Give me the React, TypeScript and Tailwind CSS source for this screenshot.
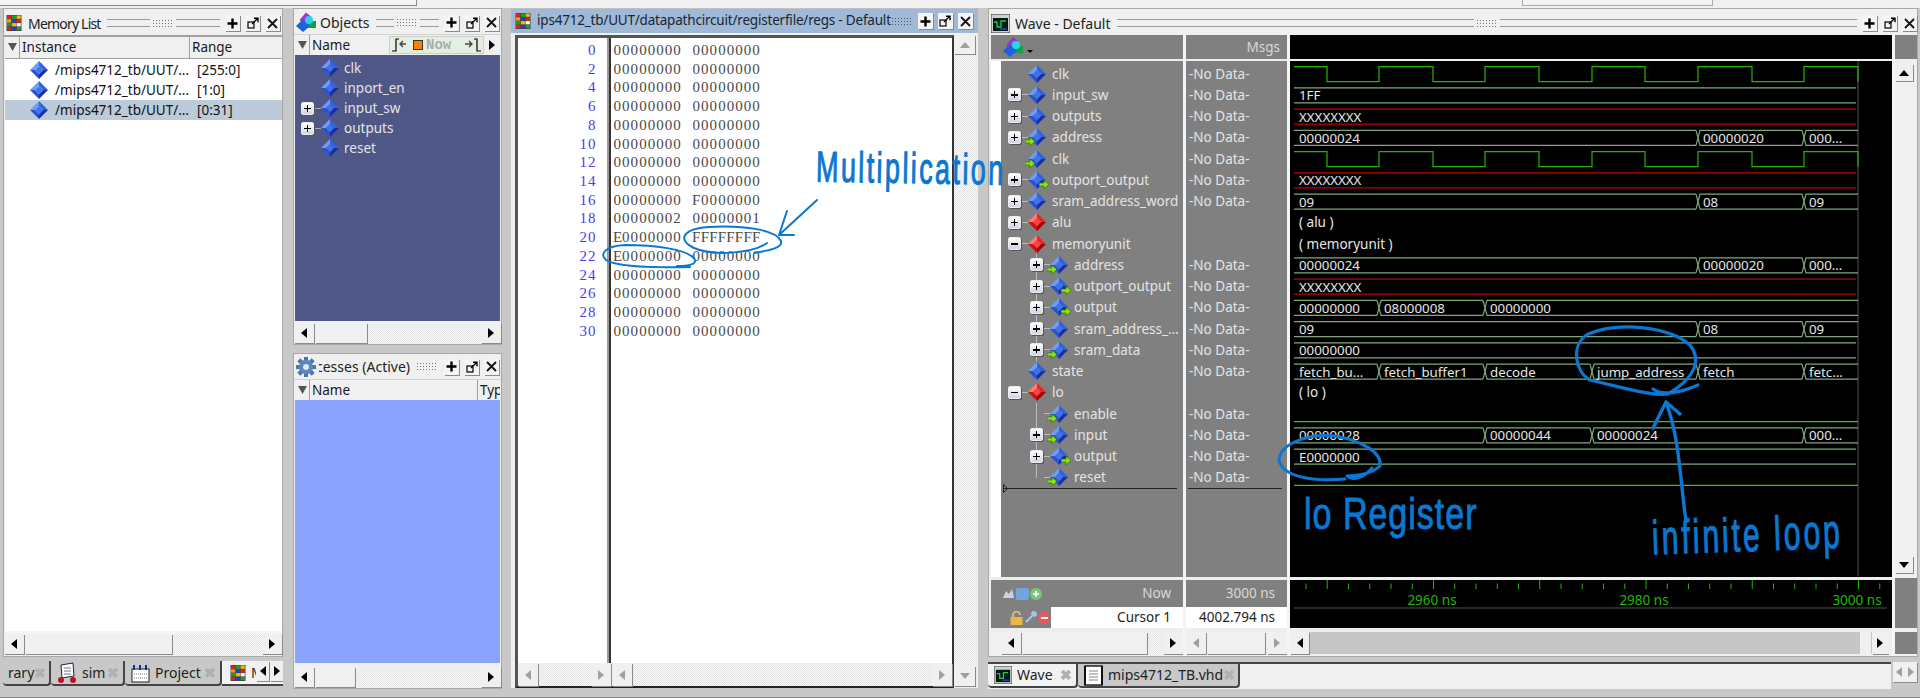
import React from "react";

const UI = "font-['Noto_Sans','Liberation_Sans',sans-serif]";

function Diamond({ red = false, size = 18 }: { red?: boolean; size?: number }) {
  const c = red
    ? { tl: "#ff7a7a", tr: "#ee2222", bl: "#cc1111", br: "#a00000", m: "#ff4040" }
    : { tl: "#6f9cf5", tr: "#2f62e0", bl: "#2a52d0", br: "#1a2fa0", m: "#3f72ee" };
  return (
    <svg width={size} height={size} viewBox="0 0 18 18" className="shrink-0">
      <polygon points="9,0 0,9 5,9 9,5" fill={c.tl} />
      <polygon points="9,0 18,9 13,9 9,5" fill={c.tr} />
      <polygon points="0,9 9,18 9,13 5,9" fill={c.bl} />
      <polygon points="18,9 9,18 9,13 13,9" fill={c.br} />
      <polygon points="9,5 13,9 9,13 5,9" fill={c.m} />
    </svg>
  );
}

function ArrowOverlay({ out }: { out?: boolean }) {
  return (
    <svg width="10" height="9" viewBox="0 0 10 9" className={out ? "absolute right-[-3px] bottom-0" : "absolute left-[-3px] bottom-0"}>
      <polygon points="0,3 5,3 5,0 10,4.5 5,9 5,6 0,6" fill="#8fe010" stroke="#1d6a00" strokeWidth="0.6" />
    </svg>
  );
}

function SigIcon({ dir, red }: { dir?: "in" | "out"; red?: boolean }) {
  return (
    <span className="relative block h-[18px] w-[18px] shrink-0">
      <Diamond red={red} />
      {dir === "in" && <ArrowOverlay />}
      {dir === "out" && <ArrowOverlay out />}
    </span>
  );
}

function Expander({ minus }: { minus?: boolean }) {
  return (
    <span className="relative block h-[13px] w-[13px] shrink-0 rounded-[2px] bg-gradient-to-b from-white to-[#cfd4e6] border border-[#eeeeee] shadow-[1px_1px_0_#555]">
      <span className="absolute left-[2px] top-[5px] h-[1.5px] w-[7px] bg-black" />
      {!minus && <span className="absolute left-[4.8px] top-[2px] h-[7px] w-[1.5px] bg-black" />}
    </span>
  );
}

function WinButtons() {
  return (
    <div className="flex items-center gap-[5px] shrink-0">
      <span className="flex h-[16px] w-[15px] items-center justify-center bg-[#f4f4f4] shadow-[1px_1px_0_#8a8a8a]">
        <svg width="11" height="11" viewBox="0 0 11 11"><path d="M5.5 0.5v10M0.5 5.5h10" stroke="#000" strokeWidth="2.4" /></svg>
      </span>
      <span className="flex h-[16px] w-[15px] items-center justify-center bg-[#f4f4f4] shadow-[1px_1px_0_#8a8a8a]">
        <svg width="12" height="12" viewBox="0 0 12 12" fill="none"><rect x="1" y="5" width="6" height="6" stroke="#000" strokeWidth="1.2" /><path d="M5 7 L10.5 1.5 M7 1.2h4v4" stroke="#000" strokeWidth="1.4" /></svg>
      </span>
      <span className="flex h-[16px] w-[15px] items-center justify-center bg-[#f4f4f4] shadow-[1px_1px_0_#8a8a8a]">
        <svg width="11" height="11" viewBox="0 0 11 11"><path d="M1 1l9 9M10 1l-9 9" stroke="#111" strokeWidth="1.8" /></svg>
      </span>
    </div>
  );
}

function Grip({ dots = true, className = "" }: { dots?: boolean; className?: string }) {
  return (
    <div className={`flex items-center gap-[2px] min-w-0 ${className}`}>
      <span className="h-[8px] flex-1 border-y border-[#9a9a9a]" />
      {dots && (
        <span className="h-[9px] w-[22px] shrink-0 bg-[radial-gradient(#777_0.7px,transparent_0.8px)] bg-[length:3px_3px]" />
      )}
      <span className="h-[8px] flex-1 border-y border-[#9a9a9a]" />
    </div>
  );
}

function GridLogo({ size = 16 }: { size?: number }) {
  const colors = ["#e02020", "#20a020", "#e8c000", "#f0a000", "#2040d0", "#e02020", "#20a020", "#e8c000", "#ffffff", "#e02020", "#2040d0", "#20a020"];
  return (
    <svg width={size} height={size} viewBox="0 0 15 16" className="shrink-0">
      <rect width="15" height="16" fill="#444" />
      {colors.map((c, i) => (
        <rect key={i} x={0.5 + (i % 3) * 4.8} y={0.5 + Math.floor(i / 3) * 3.8} width="4.2" height="3.3" fill={c} />
      ))}
    </svg>
  );
}

function ObjectsLogo() {
  return (
    <svg width="21" height="21" viewBox="0 0 21 21" className="shrink-0">
      <polygon points="4,8 10,1 15,5 9,11" fill="#b030e0" stroke="#6a1090" strokeWidth="0.6" />
      <rect x="11" y="9" width="9" height="7" fill="#18a048" />
      <polygon points="7,7 14,14 7,20 0,14" fill="#1f5fe0" />
      <circle cx="13" cy="8" r="4" fill="#20d8e8" />
    </svg>
  );
}

function Gear() {
  return (
    <svg width="20" height="20" viewBox="0 0 20 20" className="shrink-0">
      <g fill="#4a76a8">
        {[0, 45, 90, 135, 180, 225, 270, 315].map((a) => (
          <rect key={a} x="8" y="0" width="4" height="20" transform={`rotate(${a} 10 10)`} />
        ))}
      </g>
      <circle cx="10" cy="10" r="7.2" fill="#5d86b8" />
      <circle cx="10" cy="10" r="3" fill="#dfe8f0" />
    </svg>
  );
}

function WaveLogo({ size = 19 }: { size?: number }) {
  return (
    <svg width={size} height={size} viewBox="0 0 19 19" className="shrink-0">
      <rect width="19" height="19" fill="#cfcfcf" stroke="#333" />
      <rect x="2" y="4" width="15" height="13" fill="#001a10" />
      <path d="M3 8h3v5h4V7h5" stroke="#10d060" strokeWidth="1.3" fill="none" />
      <path d="M9 15h7" stroke="#4040e0" strokeWidth="1.3" />
    </svg>
  );
}

function ArrowBtn({ dir, w = 20, dim = false }: { dir: "l" | "r" | "u" | "d"; w?: number; dim?: boolean }) {
  const pts = { l: "6,0 0,5 6,10", r: "0,0 6,5 0,10", u: "0,6 5,0 10,6", d: "0,0 5,6 10,0" }[dir];
  const vert = dir === "u" || dir === "d";
  return (
    <span style={{ width: w }} className="flex h-full shrink-0 items-center justify-center bg-[#f0f0f0] shadow-[1px_1px_0_#8a8a8a]">
      <svg width={vert ? 10 : 6} height={vert ? 6 : 10} viewBox={vert ? "0 0 10 6" : "0 0 6 10"}>
        <polygon points={pts} fill={dim ? "#a0a0a0" : "#000"} />
      </svg>
    </span>
  );
}

function HScroll({ thumbW, className = "", lw = 20, rw = 20, dim = false }: { thumbW: string; className?: string; lw?: number; rw?: number; dim?: boolean }) {
  return (
    <div className={`flex h-[20px] shrink-0 items-stretch bg-[repeating-conic-gradient(#e4e4e4_0_25%,#f8f8f8_0_50%)] bg-[length:2px_2px] ${className}`}>
      <ArrowBtn dir="l" w={lw} dim={dim} />
      {thumbW && <span className={`${thumbW} ml-[1px] shrink-0 bg-[#f0f0f0] shadow-[1px_1px_0_#8a8a8a]`} />}
      <span className="flex-1" />
      <ArrowBtn dir="r" w={rw} dim={dim} />
    </div>
  );
}

function Tab({ icon, label, active, w }: { icon: React.ReactNode; label: string; active?: boolean; w: string }) {
  return (
    <div className={`flex h-[25px] shrink-0 items-center rounded-b-[4px] border-b-2 border-r-2 border-[#444] pl-[6px] pr-[4px] ${w} ${active ? "bg-[#f2f2f2]" : "bg-[#c8c8c8]"}`}>
      {icon}
      <span className="ml-[5px] text-[14px] leading-none text-[#222]">{label}</span>
      {label && <span className="ml-auto text-[14px] font-bold leading-none text-[#b0b0b0]">✖</span>}
    </div>
  );
}

function ColHead({ label, className = "" }: { label: string; className?: string }) {
  return <div className={`flex h-full items-center bg-[#f0f0f0] pl-[2px] text-[13.5px] text-[#17171f] ${className}`}>{label}</div>;
}

function SortBtn() {
  return (
    <div className="flex h-full w-[15px] shrink-0 items-center justify-center bg-[#f0f0f0] border-r border-[#a0a0a0]">
      <svg width="9" height="9" viewBox="0 0 9 9"><polygon points="0,0 9,0 4.5,8" fill="#555" /></svg>
    </div>
  );
}

function MemoryList() {
  const rows = [
    ["/mips4712_tb/UUT/…", "[255:0]"],
    ["/mips4712_tb/UUT/…", "[1:0]"],
    ["/mips4712_tb/UUT/…", "[0:31]"],
  ];
  return (
    <div className="flex w-[283px] shrink-0 flex-col pl-[3px]">
      <div className="flex min-h-0 flex-1 flex-col bg-[#f0f0f0] border border-[#a8a8a8]">
        <div className="flex h-[26px] shrink-0 items-center px-[2px] pt-[2px]">
          <GridLogo />
          <span className="ml-[6px] text-[14px] tracking-[-0.8px] text-[#222] whitespace-nowrap">Memory List</span>
          <Grip className="ml-[6px] mr-[5px] flex-1" />
          <WinButtons />
        </div>
        <div className="flex h-[23px] shrink-0 items-stretch border-t-2 border-[#a0a0a0]">
          <div className="ml-[1px] flex h-full w-[15px] items-center justify-center border-r border-[#a0a0a0]">
            <svg width="9" height="9" viewBox="0 0 9 9"><polygon points="0,0 9,0 4.5,8" fill="#555" /></svg>
          </div>
          <ColHead label="Instance" className="w-[170px] border-r border-[#a0a0a0]" />
          <ColHead label="Range" className="flex-1" />
        </div>
        <div className="ml-[1px] min-h-0 flex-1 border-t border-[#a0a0a0] bg-white pt-[1px]">
          {rows.map((r, i) => (
            <div key={i} className={`flex h-[20px] items-center ${i === 2 ? "bg-[#bccbd9]" : ""}`}>
              <span className="ml-[25px]"><Diamond /></span>
              <span className="ml-[7px] w-[139px] text-[13.5px] text-[#111] whitespace-nowrap">{r[0]}</span>
              <span className="ml-[3px] text-[13.5px] text-[#111]">{r[1]}</span>
            </div>
          ))}
        </div>
        <div className="h-[3px] shrink-0 bg-[#f4f4f4]" />
        <HScroll thumbW="w-[147px]" />
        <div className="h-[2px] shrink-0" />
      </div>
      <div className="flex h-[32px] shrink-0 items-start pt-[4px]">
        <Tab icon={null} label="rary" w="w-[48px] !pl-0" />
        <Tab icon={<Cart />} label="sim" w="w-[74px]" />
        <Tab icon={<ProjIcon />} label="Project" w="w-[97px]" />
        <div className="relative flex h-[25px] flex-1 items-center overflow-hidden border-b-2 border-[#444] bg-[#f2f2f2] pl-[8px]">
          <GridLogo />
          <span className="ml-[5px] text-[14px] leading-none text-[#222]">M</span>
          <div className="absolute right-0 top-0 flex h-[20px]">
            <ArrowBtn dir="l" w={13} />
            <span className="w-[1px]" />
            <ArrowBtn dir="r" w={13} />
          </div>
        </div>
      </div>
    </div>
  );
}

function Cart() {
  return (
    <svg width="20" height="22" viewBox="0 0 20 22" className="shrink-0">
      <path d="M4 3l12-2 1 13-12 2z" fill="#fff" stroke="#223" />
      <path d="M7 6h7M7 9h7M7 12h7" stroke="#678" />
      <circle cx="4" cy="18" r="3" fill="#c01020" />
      <circle cx="16" cy="18" r="3" fill="#c01020" />
    </svg>
  );
}

function ProjIcon() {
  return (
    <svg width="19" height="20" viewBox="0 0 19 20" className="shrink-0">
      <rect x="1" y="6" width="17" height="13" fill="#fff" stroke="#222" />
      <path d="M3 2v5M9 2v5M15 2v5" stroke="#1a2aa0" strokeWidth="2" />
      <path d="M3 11h13M3 15h13" stroke="#777" strokeDasharray="1 1" />
    </svg>
  );
}

function ObjectsCol() {
  const rows: [string, boolean][] = [["clk", false], ["inport_en", false], ["input_sw", true], ["outputs", true], ["reset", false]];
  return (
    <div className="ml-[10px] flex w-[209px] shrink-0 flex-col">
      <div className="flex h-[337px] shrink-0 flex-col bg-[#f0f0f0] border border-[#a8a8a8]">
        <div className="flex h-[25px] shrink-0 items-center pl-[2px] pr-[2px] pt-[2px]">
          <ObjectsLogo />
          <span className="ml-[3px] text-[14px] text-[#222]">Objects</span>
          <Grip className="ml-[6px] mr-[5px] flex-1" />
          <WinButtons />
        </div>
        <div className="flex h-[21px] shrink-0 items-stretch border-t border-[#d0d0d0] pl-[1px] pr-[1px]">
          <SortBtn />
          <ColHead label="Name" className="w-[79px]" />
          <div className="my-[1px] flex w-[95px] shrink-0 items-center bg-[#e4efe2] border border-[#c8d0c8]">
            <svg width="20" height="16" viewBox="0 0 20 16" fill="none"><path d="M2 14h4V2h3" stroke="#000" strokeWidth="1.2" /><path d="M16 7h-5M13 4l-3 3 3 3" stroke="#444" strokeWidth="1.4" /></svg>
            <span className="ml-[3px] h-[10px] w-[10px] shrink-0 bg-[#ff8000] border border-[#333]" />
            <span className="ml-[3px] font-['Liberation_Mono',monospace] text-[14px] font-bold leading-none text-[#a9aea9]">Now</span>
            <svg width="20" height="16" viewBox="0 0 20 16" fill="none" className="ml-auto"><path d="M18 14h-4V2h-3" stroke="#000" strokeWidth="1.2" /><path d="M2 7h6M6 4l3 3-3 3" stroke="#444" strokeWidth="1.4" /></svg>
          </div>
          <div className="flex flex-1 items-center justify-center">
            <svg width="6" height="10" viewBox="0 0 6 10"><polygon points="0,0 6,5 0,10" fill="#000" /></svg>
          </div>
        </div>
        <div className="ml-[1px] mr-[1px] flex min-h-0 flex-1 flex-col bg-[#4f5787] pt-[3px]">
          {rows.map(([n, exp]) => (
            <div key={n} className="flex h-[20px] items-center">
              <span className="ml-[6px] flex w-[14px] shrink-0">{exp && <Expander />}</span>
              <span className="h-[1px] w-[6px] shrink-0 bg-[#aaa]" style={{ opacity: exp ? 1 : 0 }} />
              <Diamond />
              <span className="ml-[5px] text-[13.5px] text-[#e4e4e4]">{n}</span>
            </div>
          ))}
        </div>
        <HScroll thumbW="w-[52px]" className="mt-[2px] mb-[1px]" lw={20} rw={20} />
      </div>
      <div className="mt-[8px] flex min-h-0 flex-1 flex-col bg-[#f0f0f0] border border-[#a8a8a8]">
        <div className="flex h-[25px] shrink-0 items-center pl-[2px] pr-[2px]">
          <Gear />
          <span className="ml-[3px] w-[91px] overflow-hidden text-[14px] text-[#222] whitespace-nowrap">
            <span className="-ml-[3px] block">cesses (Active)</span>
          </span>
          <Grip className="ml-[4px] mr-[4px] flex-1" />
          <WinButtons />
        </div>
        <div className="flex h-[21px] shrink-0 items-stretch border-t border-[#d0d0d0] pl-[1px] pr-[1px]">
          <SortBtn />
          <ColHead label="Name" className="w-[168px] border-r border-[#a0a0a0]" />
          <ColHead label="Typ" className="flex-1 overflow-hidden" />
        </div>
        <div className="mx-[1px] min-h-0 flex-1 bg-[#8aa3fc]" />
        <HScroll thumbW="w-[40px]" className="mt-[4px] mb-[1px]" lw={20} rw={20} />
      </div>
    </div>
  );
}

function Cells({ s }: { s: string }) {
  return (
    <>
      {s.split("").map((ch, i) => (
        <span key={i} className="inline-block w-[8.55px] text-center">{ch}</span>
      ))}
    </>
  );
}

function MemView() {
  const rows = Array.from({ length: 16 }, (_, i) => {
    const addr = i * 2;
    let a = "00000000";
    let b = "00000000";
    if (addr === 16) b = "F0000000";
    if (addr === 18) { a = "00000002"; b = "00000001"; }
    if (addr === 20) { a = "E0000000"; b = "FFFFFFFF"; }
    if (addr === 22) a = "E0000000";
    return { addr, a, b };
  });
  const mono = "font-['Liberation_Serif',serif] text-[15px] leading-[18.73px] whitespace-nowrap";
  return (
    <div className="ml-[9px] flex w-[467px] shrink-0 flex-col pb-[1px]">
      <div className="flex h-[25px] shrink-0 items-center bg-[#9fb9d6] pl-[4px] pr-[7px] border-t border-[#c0c0c0]">
        <GridLogo />
        <span className="ml-[6px] text-[13.5px] leading-none tracking-[-0.2px] text-[#1c2430] whitespace-nowrap">ips4712_tb/UUT/datapathcircuit/registerfile/regs - Default</span>
        <span className="ml-auto mr-[5px] h-[9px] w-[22px] shrink-0 bg-[radial-gradient(#555_0.7px,transparent_0.8px)] bg-[length:3px_3px]" />
        <WinButtons />
      </div>
      <div className="flex min-h-0 flex-1 bg-[#f0f0f0] pl-[4px] pt-[2px]">
        <div className="flex min-w-0 flex-1 flex-col border-b-2 border-r-2 border-l-[3px] border-t-[3px] border-b-[#222] border-r-[#333] border-l-[#555] border-t-[#555]">
          <div className="flex min-h-0 flex-1 bg-white">
            <div className="w-[91px] shrink-0 border-r-[2px] border-[#9a9a9a] pr-[11px] pt-[3px] text-right">
              {rows.map((r) => (
                <div key={r.addr} className={`h-[18.73px] ${mono} text-[#4a3cf0]`}><Cells s={String(r.addr)} /></div>
              ))}
            </div>
            <div className="w-[2px] shrink-0 bg-[#333]" />
            <div className="min-w-0 flex-1 pl-[2px] pt-[3px]">
              {rows.map((r) => (
                <div key={r.addr} className={`flex h-[18.73px] ${mono} text-[#4a4a4a]`}>
                  <span className="w-[79px]"><Cells s={r.a} /></span>
                  <span><Cells s={r.b} /></span>
                </div>
              ))}
            </div>
          </div>
          <div className="flex h-[23px] shrink-0 gap-[1px]">
            <HScroll thumbW="" className="!h-[23px] w-[93px]" dim />
            <HScroll thumbW="" className="!h-[23px] flex-1" dim />
          </div>
        </div>
        <div className="flex w-[24px] shrink-0 flex-col pb-[2px] pr-[2px] bg-[repeating-conic-gradient(#e4e4e4_0_25%,#f8f8f8_0_50%)] bg-[length:2px_2px]">
          <div className="h-[19px] shrink-0"><ArrowBtn dir="u" w={21} dim /></div>
          <div className="flex-1" />
          <div className="h-[20px] shrink-0"><ArrowBtn dir="d" w={21} dim /></div>
        </div>
      </div>
    </div>
  );
}

const ROW = 21.25;
const topY = (i: number) => 5.7 + ROW * i; // in wave body svg coordinates (body starts at y=61)
const W = 1290; // svg x origin in page coordinates
const px = (x: number) => x - W;
const END = 1858;
const WF = "'Noto Sans','Liberation Sans',sans-serif";

type Seg = [number, number, string];

function Clock({ i }: { i: number }) {
  const t = topY(i);
  const b = t + 15;
  const xs = [1327, 1379, 1433, 1485, 1539, 1592, 1645, 1698, 1752, 1804, 1858];
  let d = `M${px(1294)} ${t}`;
  xs.forEach((x, k) => {
    const y = k % 2 === 0 ? t : b;
    const ny = k % 2 === 0 ? b : t;
    d += ` L${px(x)} ${y} L${px(x)} ${ny}`;
  });
  return <path d={d} stroke="#22b800" strokeWidth="1.2" fill="none" />;
}

function Bus({ i, segs, color = "#7fa97a", text = "#e6e6e6" }: { i: number; segs: Seg[]; color?: string; text?: string }) {
  const t = topY(i);
  const b = t + 15;
  return (
    <g>
      {segs.map(([a, e, s], k) => (
        <g key={k}>
          <path
            d={
              k === 0
                ? `M${px(a)} ${t} H${px(e) - 2} M${px(a)} ${b} H${px(e) - 2}`
                : `M${px(a)} ${t + 7.5} L${px(a) + 2} ${t} H${px(e) - (e === END ? 0 : 2)} M${px(a)} ${t + 7.5} L${px(a) + 2} ${b} H${px(e) - (e === END ? 0 : 2)}`
            }
            stroke={color}
            strokeWidth="1.2"
            fill="none"
          />
          {k > 0 && <path d={`M${px(a)} ${t + 7.5} L${px(a) - 2} ${t} M${px(a)} ${t + 7.5} L${px(a) - 2} ${b}`} stroke={color} strokeWidth="1.2" fill="none" />}
          <text x={px(a) + 5} y={t + 12.5} fontSize="13.3" fill={text} fontFamily={WF}>{s}</text>
        </g>
      ))}
    </g>
  );
}

function Label({ i, s }: { i: number; s: string }) {
  return <text x={px(1299)} y={topY(i) + 12} fontSize="13.5" fill="#e6e6e6" fontFamily={WF}>{s}</text>;
}

function WaveChart() {
  const addr: Seg[] = [[1294, 1698, "00000024"], [1698, 1804, "00000020"], [1804, END, "000…"]];
  const sram: Seg[] = [[1294, 1698, "09"], [1698, 1804, "08"], [1804, END, "09"]];
  return (
    <svg width="602" height="515" viewBox="0 0 602 515" className="block">
      <line x1={px(END)} x2={px(END)} y1="0" y2="515" stroke="#555" />
      <Clock i={0} />
      <Bus i={1} segs={[[1294, END, "1FF"]]} />
      <Bus i={2} segs={[[1294, END, "XXXXXXXX"]]} color="#c00000" />
      <Bus i={3} segs={addr} />
      <Clock i={4} />
      <Bus i={5} segs={[[1294, END, "XXXXXXXX"]]} color="#c00000" />
      <Bus i={6} segs={sram} />
      <Label i={7} s="( alu )" />
      <Label i={8} s="( memoryunit )" />
      <Bus i={9} segs={addr} />
      <Bus i={10} segs={[[1294, END, "XXXXXXXX"]]} color="#c00000" />
      <Bus i={11} segs={[[1294, 1379, "00000000"], [1379, 1485, "08000008"], [1485, END, "00000000"]]} />
      <Bus i={12} segs={sram} />
      <Bus i={13} segs={[[1294, END, "00000000"]]} />
      <Bus i={14} segs={[[1294, 1379, "fetch_bu…"], [1379, 1485, "fetch_buffer1"], [1485, 1592, "decode"], [1592, 1698, "jump_address"], [1698, 1804, "fetch"], [1804, END, "fetc…"]]} />
      <Label i={15} s="( lo )" />
      <line x1={px(1294)} x2={px(END)} y1={topY(16) + 15} y2={topY(16) + 15} stroke="#33cc00" strokeWidth="1.2" />
      <Bus i={17} segs={[[1294, 1485, "00000028"], [1485, 1592, "00000044"], [1592, 1804, "00000024"], [1804, END, "000…"]]} />
      <Bus i={18} segs={[[1294, END, "E0000000"]]} />
      <line x1={px(1294)} x2={px(END)} y1={topY(19) + 15} y2={topY(19) + 15} stroke="#33cc00" strokeWidth="1.2" />
    </svg>
  );
}

function Ruler() {
  const ticks = Array.from({ length: 28 }, (_, k) => 1306 + 21.25 * k);
  const labels: [number, string][] = [[1432, "2960 ns"], [1644, "2980 ns"], [1857, "3000 ns"]];
  return (
    <svg width="602" height="48" viewBox="0 0 602 48" className="block">
      {ticks.map((x, k) => {
        const major = (k - 1) % 5 === 0;
        return <line key={k} x1={px(x)} x2={px(x)} y1={major ? 0 : 3.5} y2="9" stroke="#22b800" strokeWidth="1" />;
      })}
      {labels.map(([x, s]) => (
        <text key={s} x={px(x)} y="25" textAnchor="middle" fontSize="13.5" fill="#22b800" fontFamily={WF}>{s}</text>
      ))}
      <line x1={px(1294)} x2={px(1887)} y1="28" y2="28" stroke="#555" />
    </svg>
  );
}

type NameRow = { n: string; d: 0 | 1; exp?: "+" | "-"; dir?: "in" | "out"; red?: boolean; msg?: boolean };

const names: NameRow[] = [
  { n: "clk", d: 0, msg: true },
  { n: "input_sw", d: 0, exp: "+", msg: true },
  { n: "outputs", d: 0, exp: "+", msg: true },
  { n: "address", d: 0, exp: "+", dir: "in", msg: true },
  { n: "clk", d: 0, dir: "in", msg: true },
  { n: "outport_output", d: 0, exp: "+", dir: "out", msg: true },
  { n: "sram_address_word", d: 0, exp: "+", msg: true },
  { n: "alu", d: 0, exp: "+", red: true },
  { n: "memoryunit", d: 0, exp: "-", red: true },
  { n: "address", d: 1, exp: "+", dir: "in", msg: true },
  { n: "outport_output", d: 1, exp: "+", dir: "out", msg: true },
  { n: "output", d: 1, exp: "+", dir: "out", msg: true },
  { n: "sram_address_…", d: 1, exp: "+", msg: true },
  { n: "sram_data", d: 1, exp: "+", dir: "in", msg: true },
  { n: "state", d: 0, msg: true },
  { n: "lo", d: 0, exp: "-", red: true },
  { n: "enable", d: 1, dir: "in", msg: true },
  { n: "input", d: 1, exp: "+", dir: "in", msg: true },
  { n: "output", d: 1, exp: "+", dir: "out", msg: true },
  { n: "reset", d: 1, dir: "in", msg: true },
];

function WavePanel() {
  return (
    <div className="ml-[10px] flex w-[930px] shrink-0 flex-col">
      <div className="flex min-h-0 flex-1 flex-col bg-[#f0f0f0] border border-[#a8a8a8]">
        <div className="flex h-[26px] shrink-0 items-center pl-[2px] pt-[2px]">
          <WaveLogo />
          <span className="ml-[5px] text-[14px] text-[#222]">Wave - Default</span>
          <Grip className="ml-[6px] mr-[5px] flex-1" />
          <WinButtons />
        </div>
        <div className="flex min-h-0 flex-1 pl-[2px]">
          <div className="flex w-[192px] shrink-0 flex-col">
            <div className="flex h-[24px] shrink-0 items-center bg-[#808080] pl-[12px]">
              <ObjectsLogo />
              <svg width="6" height="3" viewBox="0 0 6 3" className="ml-[3px] mt-[8px]"><polygon points="0,0 6,0 3,3" fill="#000" /></svg>
            </div>
            <div className="h-[2px] shrink-0 bg-[#eeeeee]" />
            <div className="flex min-h-0 flex-1 bg-white pl-[10px]">
              <div className="relative flex-1 bg-[#808080] pt-[2px]">
                {names.map((r, i) => (
                  <div key={i} className="relative flex h-[21.25px] items-center">
                    {r.d === 1 && <span className="absolute left-[35px] top-0 w-[1px] bg-[#bdbdbd]" style={{ height: r.n === "reset" ? "11px" : "100%" }} />}
                    <span className={`block shrink-0 ${r.d === 1 ? "w-[29px]" : "w-[7px]"}`} />
                    <span className="flex w-[14px] shrink-0 items-center">{r.exp && <Expander minus={r.exp === "-"} />}</span>
                    <span className="h-[1px] w-[6px] shrink-0 bg-[#bdbdbd]" style={{ opacity: r.exp || r.n === "enable" || r.n === "reset" ? 1 : 0 }} />
                    <SigIcon dir={r.dir} red={r.red} />
                    <span className="ml-[6px] text-[13.5px] whitespace-nowrap text-[#e4e4e4]">{r.n}</span>
                  </div>
                ))}
                <div className="relative ml-[2px] mr-[6px] h-[1px] bg-[#222]">
                  <svg width="5" height="9" viewBox="0 0 5 9" className="absolute left-0 top-[-4px]"><polygon points="0.5,0.5 4.5,4.5 0.5,8.5" fill="none" stroke="#222" /></svg>
                </div>
              </div>
            </div>
            <div className="h-[3px] shrink-0 bg-[#eeeeee]" />
            <div className="flex h-[27px] shrink-0 items-center justify-end bg-[#808080] pr-[12px]">
              <span className="mr-auto ml-[11px] flex items-center gap-[1px]">
                <svg width="13" height="13" viewBox="0 0 13 13"><path d="M1 11l3-7 3 3 3-5 2 9z" fill="#c8d4e6" /></svg>
                <span className="h-[12px] w-[13px] rounded-[2px] bg-[#74a4dc]" />
                <span className="flex h-[12px] w-[12px] items-center justify-center rounded-full bg-[#7cc47c]">
                  <svg width="8" height="8" viewBox="0 0 8 8"><path d="M4 1v6M1 4h6" stroke="#fff" strokeWidth="1.6" /></svg>
                </span>
              </span>
              <span className="text-[13.5px] text-[#d8d8d8]">Now</span>
            </div>
            <div className="flex h-[21px] shrink-0 items-stretch bg-[#808080]">
              <span className="flex w-[60px] shrink-0 items-center justify-end gap-[1px] pr-[1px]">
                <svg width="13" height="14" viewBox="0 0 13 14"><path d="M3 7V4a3.5 3.5 0 0 1 7 0" stroke="#f0d070" strokeWidth="1.5" fill="none" /><rect x="0.5" y="6" width="12" height="8" fill="#e8b840" /></svg>
                <svg width="13" height="13" viewBox="0 0 13 13"><path d="M2 11l6-6M9 1a3 3 0 0 1 3 3l-2 1-2-2z" stroke="#a8c4ec" strokeWidth="2" fill="#a8c4ec" /></svg>
                <span className="flex h-[12px] w-[12px] items-center justify-center rounded-full bg-[#e85858]">
                  <span className="h-[2px] w-[7px] bg-white" />
                </span>
              </span>
              <span className="flex flex-1 items-center justify-end bg-white pr-[12px] text-[13.5px] text-[#222]">Cursor 1</span>
            </div>
            <div className="h-[4px] shrink-0 bg-[#eeeeee]" />
            <HScroll thumbW="w-[125px]" className="ml-[10px] !h-[22px]" lw={20} rw={20} />
            <div className="h-[2px] shrink-0" />
          </div>
          <div className="w-[3px] shrink-0 bg-[#f4f4f4]" />
          <div className="flex w-[101px] shrink-0 flex-col">
            <div className="flex h-[24px] shrink-0 items-center justify-end bg-[#808080] pr-[7px] text-[13.5px] text-[#d8d8d8]">Msgs</div>
            <div className="h-[2px] shrink-0 bg-[#eeeeee]" />
            <div className="min-h-0 flex-1 bg-[#808080] pt-[2px]">
              {names.map((r, i) => (
                <div key={i} className="flex h-[21.25px] items-center pl-[3px] text-[13.5px] text-[#e4e4e4]">{r.msg ? "-No Data-" : ""}</div>
              ))}
              <div className="ml-[2px] mr-[5px] h-[1px] bg-[#222]" />
            </div>
            <div className="h-[3px] shrink-0 bg-[#eeeeee]" />
            <div className="flex h-[27px] shrink-0 items-center justify-end bg-[#808080] pr-[12px] text-[13.5px] text-[#d8d8d8]">3000 ns</div>
            <div className="flex h-[21px] shrink-0 items-center justify-end bg-white pr-[12px] text-[13.5px] text-[#222]">4002.794 ns</div>
            <div className="h-[4px] shrink-0 bg-[#eeeeee]" />
            <HScroll thumbW="w-[58px]" className="!h-[22px]" lw={20} rw={20} dim />
            <div className="h-[2px] shrink-0" />
          </div>
          <div className="w-[3px] shrink-0 bg-[#f4f4f4]" />
          <div className="flex w-[602px] shrink-0 flex-col">
            <div className="h-[24px] shrink-0 bg-black" />
            <div className="h-[2px] shrink-0 bg-[#eeeeee]" />
            <div className="min-h-0 flex-1 overflow-hidden bg-black"><WaveChart /></div>
            <div className="h-[3px] shrink-0 bg-[#eeeeee]" />
            <div className="h-[48px] shrink-0 overflow-hidden bg-black"><Ruler /></div>
            <div className="h-[4px] shrink-0 bg-[#eeeeee]" />
            <div className="flex h-[22px] shrink-0 items-stretch bg-[#c6c6c6]">
              <ArrowBtn dir="l" w={19} />
              <span className="flex-1" />
              <span className="mr-[1px] w-[11px] shrink-0 bg-[#f0f0f0]" />
              <ArrowBtn dir="r" w={16} />
              <span className="w-[4px] shrink-0 bg-[#eeeeee]" />
            </div>
            <div className="h-[2px] shrink-0" />
          </div>
          <div className="w-[3px] shrink-0 bg-[#f4f4f4]" />
          <div className="flex w-[22px] shrink-0 flex-col">
            <div className="h-[24px] shrink-0 bg-[#808080]" />
            <div className="h-[5px] shrink-0" />
            <div className="flex min-h-0 flex-1 flex-col bg-[#f0f0f0]">
              <div className="h-[17px] shrink-0"><ArrowBtn dir="u" w={18} /></div>
              <div className="flex-1" />
              <div className="h-[17px] shrink-0"><ArrowBtn dir="d" w={18} /></div>
            </div>
            <div className="h-[5px] shrink-0" />
            <div className="h-[50px] shrink-0 bg-[#808080]" />
            <div className="h-[4px] shrink-0" />
            <div className="h-[22px] shrink-0 bg-[#808080]" />
            <div className="h-[2px] shrink-0" />
          </div>
        </div>
      </div>
      <div className="flex h-[32px] shrink-0 items-start pt-[5px]">
        <div className="flex h-[27px] flex-1 items-start bg-[#f0f0f0] border-t-2 border-[#444]">
          <Tab icon={<WaveLogo size={18} />} label="Wave" active w="w-[90px] !h-[24px]" />
          <Tab icon={<DocIcon />} label="mips4712_TB.vhd" w="w-[162px] !h-[24px]" />
        </div>
        <div className="ml-[2px] flex h-[20px] w-[25px] shrink-0">
          <ArrowBtn dir="l" w={12} dim />
          <ArrowBtn dir="r" w={12} dim />
        </div>
      </div>
    </div>
  );
}

function DocIcon() {
  return (
    <svg width="19" height="21" viewBox="0 0 19 21" className="shrink-0">
      <rect x="1" y="1" width="17" height="19" fill="#fff" stroke="#222" strokeWidth="1.5" />
      <path d="M1 1v19M18 1v19" stroke="#111" strokeWidth="2" />
      <path d="M5 6h9M5 9h9M5 12h9M5 15h9" stroke="#888" />
    </svg>
  );
}

function Annotations() {
  const ink = "#0a78d2";
  const hand = "absolute font-['Liberation_Sans',sans-serif] leading-[50px] text-[#0a78d2] whitespace-nowrap [-webkit-text-stroke:0.7px_#0a78d2]";
  return (
    <>
      <svg width="1920" height="698" viewBox="0 0 1920 698" className="pointer-events-none absolute left-0 top-0" fill="none" stroke={ink} strokeLinecap="round" strokeLinejoin="round">
        <path d="M767 243 C 752 254 712 256 694 248 C 676 239 684 229 708 227 C 745 225 776 230 781 241 C 783 248 770 250 755 253" strokeWidth="2" />
        <path d="M677 266 C 695 266 697 262 694 258 C 685 249 655 245 625 245 C 605 246 599 254 606 260 C 615 266 650 268 690 267" strokeWidth="2" />
        <path d="M817 200 L779 235 M787 211 L779 235 L794 235" strokeWidth="2" />
        <path d="M1372 468 C 1364 478 1352 481 1347 476 C 1356 476 1372 474 1380 466 C 1382 452 1362 441 1335 436 C 1305 433 1280 445 1279 460 C 1282 476 1310 482 1345 479" strokeWidth="3" />
        <path d="M1590 380 C 1575 372 1570 345 1588 334 C 1620 321 1670 327 1690 345 C 1702 360 1695 378 1668 394 C 1650 396 1625 388 1590 380 M1653 389 C 1662 396 1680 393 1698 385" strokeWidth="3.2" />
        <path d="M1686 521 C 1680 480 1680 440 1666 402 M1653 428 L1666 402 L1680 414" strokeWidth="3.4" />
      </svg>
      <span className={`${hand} left-[816px] top-[142px] origin-left rotate-[1deg] scale-y-[1.6] text-[27px] tracking-[2.4px]`}>Multiplication</span>
      <span className={`${hand} left-[1304px] top-[488px] scale-y-[1.3] text-[34px] tracking-[1px]`}>lo Register</span>
      <span className={`${hand} left-[1652px] top-[510px] -rotate-[2deg] scale-y-[1.6] text-[30px] tracking-[3px]`}>infinite loop</span>
    </>
  );
}

export default function App() {
  return (
    <div className={`relative flex h-[698px] w-[1920px] flex-col overflow-hidden bg-[#c8c8c8] ${UI}`}>
      <div className="flex h-[8px] shrink-0 bg-[#f0f0f0]">
        <div className="h-[6px] w-[417px] border-b border-r border-[#888] bg-[#f4f4f4]" />
        <div className="ml-[1105px] h-[6px] w-[191px] border-b border-r border-l border-[#aaa] bg-[#f4f4f4]" />
      </div>
      <div className="flex min-h-0 flex-1">
        <MemoryList />
        <ObjectsCol />
        <MemView />
        <WavePanel />
      </div>
      <div className="h-[9px] shrink-0 border-b border-[#888]" />
      <Annotations />
    </div>
  );
}
